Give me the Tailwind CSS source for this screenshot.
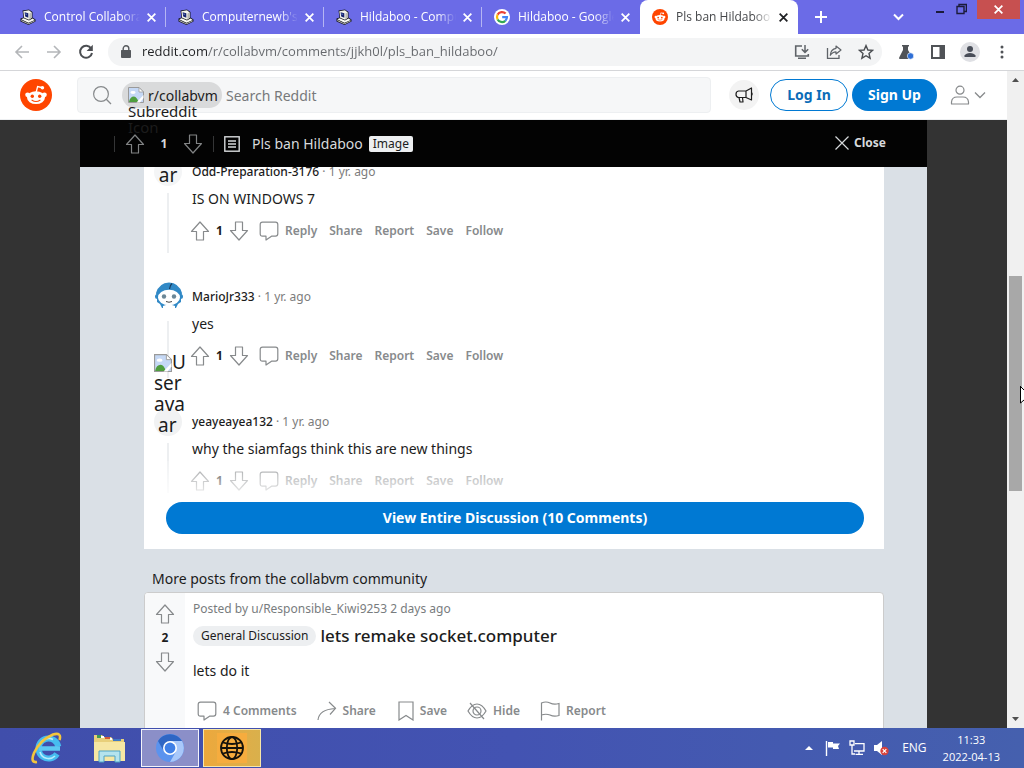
<!DOCTYPE html>
<html lang="en">
<head>
    <meta charset="UTF-8">
    <meta name="viewport" content="width=device-width, initial-scale=1.0">
    <title>Pls ban Hildaboo : collabvm</title>
    <script src="https://cdn.jsdelivr.net/npm/@tailwindcss/browser@4"></script>
</head>
<body class="h-screen overflow-hidden flex flex-col bg-white font-['Noto_Sans',sans-serif] text-[#1c1c1c]">
    <!-- Icon sprite -->
    <svg class="hidden" aria-hidden="true">
        <symbol id="up" viewBox="0 0 20 20"><path d="M10 1 L18.5 10.5 H13.5 V19 H6.5 V10.5 H1.5 Z" fill="none" stroke="currentColor" stroke-width="1.2" stroke-linejoin="round"/></symbol>
        <symbol id="down" viewBox="0 0 20 20"><path d="M10 19 L1.5 9.5 H6.5 V1 H13.5 V9.5 H18.5 Z" fill="none" stroke="currentColor" stroke-width="1.2" stroke-linejoin="round"/></symbol>
        <symbol id="comment" viewBox="0 0 20 20"><path d="M3.5 1.2 H16.5 Q18.8 1.2 18.8 3.5 V12.8 Q18.8 15.2 16.5 15.2 H12.5 L7 19 V15.2 H3.5 Q1.2 15.2 1.2 12.8 V3.5 Q1.2 1.2 3.5 1.2 Z" fill="none" stroke="currentColor" stroke-width="1.2" stroke-linejoin="round"/></symbol>
        <symbol id="close" viewBox="0 0 10 10"><path d="M1.5 1.5 L8.5 8.5 M8.5 1.5 L1.5 8.5" fill="none" stroke="currentColor" stroke-width="1.6"/></symbol>
        <symbol id="chevron" viewBox="0 0 12 8"><path d="M1 1.5 L6 6.5 L11 1.5" fill="none" stroke="currentColor" stroke-width="1.3"/></symbol>
        <symbol id="pc" viewBox="0 0 16 16">
            <path d="M2.5 1.5 L9 .5 L12.5 3 V8.5 L15.5 10.5 V12.5 L8.5 16 L.5 12.5 V9.5 L3.5 8.5 Z" fill="#15161f"/>
            <path d="M3.3 2.2 L9 1.3 L11.7 3.4 V8.8 L9 10.8 L4.2 8.8 Z" fill="#f4f4ec"/>
            <path d="M4.6 3.3 L8.3 4.3 V8.8 L5.2 7.6 Z" fill="#17246e"/>
            <path d="M5.3 4.4 L6.6 4.8 V6 L5.5 5.6 Z" fill="#7d9be0"/>
            <path d="M9.4 4.4 L11.7 3.4 V8.8 L9.4 10.6 Z" fill="#b9b9b4"/>
            <path d="M1.3 10.2 L3.6 9.3 L9 11.6 L12.6 9.4 L14.7 10.9 L8.5 13.8 Z" fill="#fafaf4"/>
            <path d="M1.3 11.1 L8.4 14.5 L14.7 11.6 V12.2 L8.5 15.2 L1.3 12 Z" fill="#d0d0ca"/>
        </symbol>
        <symbol id="reddit" viewBox="0 0 32 32">
            <circle cx="16" cy="16" r="16" fill="#ff4500"/>
            <path d="M16 14 L17.6 7.6 L21.6 8.5" fill="none" stroke="#fff" stroke-width="1.3"/>
            <circle cx="22.4" cy="8.7" r="1.8" fill="#fff"/>
            <circle cx="7.6" cy="15.8" r="2.4" fill="#fff"/>
            <circle cx="24.4" cy="15.8" r="2.4" fill="#fff"/>
            <ellipse cx="16" cy="18.6" rx="9" ry="6.4" fill="#fff"/>
            <circle cx="12.3" cy="17.2" r="1.7" fill="#ff4500"/>
            <circle cx="19.7" cy="17.2" r="1.7" fill="#ff4500"/>
            <path d="M12 21.2 Q16 23.8 20 21.2" fill="none" stroke="#ff4500" stroke-width="1.1" stroke-linecap="round"/>
        </symbol>
        <symbol id="broken" viewBox="0 0 16 16">
            <path d="M.5 .5 H11 L15.5 5 V15.5 H.5 Z" fill="#c5d8f5" stroke="#9a9a9a"/>
            <path d="M11 .5 V5 H15.5 Z" fill="#fff" stroke="#9a9a9a" stroke-width=".8"/>
            <ellipse cx="5" cy="5.5" rx="2.6" ry="1.4" fill="#fff"/>
            <path d="M1 15 Q2 9.5 6 9.5 Q9 10 10.5 15 Z" fill="#4f9e3e"/>
            <path d="M8.5 15.5 L15.5 8 V11 L12 15.5 Z" fill="#fff"/>
        </symbol>
    </svg>

    <!-- Tab strip -->
    <div class="h-[34px] shrink-0 flex bg-[#6b6be7] pl-2 text-[12px] text-white font-['Open_Sans',sans-serif]">
        <div class="flex-1 max-w-[158px] min-w-0 flex items-center pl-3 pr-2">
            <svg class="size-4 shrink-0"><use href="#pc"/></svg>
            <span class="flex-1 ml-2 overflow-hidden whitespace-nowrap mask-r-from-80% mask-r-to-100%">Control Collaborative</span>
            <button class="ml-1 p-0.5" aria-label="Close tab"><svg class="size-[11px]"><use href="#close"/></svg></button>
            <span class="ml-1.5 -mr-2 w-px h-5 bg-white/50"></span>
        </div>
        <div class="flex-1 max-w-[158px] min-w-0 flex items-center pl-3 pr-2">
            <svg class="size-4 shrink-0"><use href="#pc"/></svg>
            <span class="flex-1 ml-2 overflow-hidden whitespace-nowrap mask-r-from-80% mask-r-to-100%">Computernewb's VM</span>
            <button class="ml-1 p-0.5" aria-label="Close tab"><svg class="size-[11px]"><use href="#close"/></svg></button>
            <span class="ml-1.5 -mr-2 w-px h-5 bg-white/50"></span>
        </div>
        <div class="flex-1 max-w-[158px] min-w-0 flex items-center pl-3 pr-2">
            <svg class="size-4 shrink-0"><use href="#pc"/></svg>
            <span class="flex-1 ml-2 overflow-hidden whitespace-nowrap mask-r-from-80% mask-r-to-100%">Hildaboo - Computer</span>
            <button class="ml-1 p-0.5" aria-label="Close tab"><svg class="size-[11px]"><use href="#close"/></svg></button>
            <span class="ml-1.5 -mr-2 w-px h-5 bg-white/50"></span>
        </div>
        <div class="flex-1 max-w-[158px] min-w-0 flex items-center pl-3 pr-2">
            <svg class="size-4 shrink-0" viewBox="0 0 16 16">
                <circle cx="8" cy="8" r="8" fill="#fff"/>
                <g fill="none" stroke-width="2.2">
                    <path d="M11.6 4.6 A5 5 0 0 0 3.6 5.6" stroke="#ea4335"/>
                    <path d="M3.6 5.6 A5 5 0 0 0 3.6 10.4" stroke="#fbbc05"/>
                    <path d="M3.6 10.4 A5 5 0 0 0 11.3 11.8" stroke="#34a853"/>
                    <path d="M11.3 11.8 A5 5 0 0 0 13 8.1 H8.2" stroke="#4285f4"/>
                </g>
            </svg>
            <span class="flex-1 ml-2 overflow-hidden whitespace-nowrap mask-r-from-80% mask-r-to-100%">Hildaboo - Google</span>
            <button class="ml-1 p-0.5" aria-label="Close tab"><svg class="size-[11px]"><use href="#close"/></svg></button>
            <span class="ml-1.5 -mr-2 w-px h-5"></span>
        </div>
        <div class="flex-1 max-w-[158px] min-w-0 flex items-center pl-3 pr-2 bg-white rounded-t-lg text-[#45474a]">
            <svg class="size-4 shrink-0"><use href="#reddit"/></svg>
            <span class="flex-1 ml-2 overflow-hidden whitespace-nowrap mask-r-from-80% mask-r-to-100%">Pls ban Hildaboo : co</span>
            <button class="ml-1 p-0.5 text-[#202124]" aria-label="Close tab"><svg class="size-[11px]"><use href="#close"/></svg></button>
            <span class="ml-1.5 -mr-2 w-px h-5"></span>
        </div>
        <button class="ml-4 self-center" aria-label="New tab">
            <svg class="size-[14px]" viewBox="0 0 14 14"><path d="M7 1 V13 M1 7 H13" stroke="#fff" stroke-width="2"/></svg>
        </button>
        <button class="ml-auto mr-[26px] self-center" aria-label="Search tabs">
            <svg class="w-[11px] h-2" viewBox="0 0 11 8"><path d="M1 1.5 L5.5 6 L10 1.5" fill="none" stroke="#fff" stroke-width="2"/></svg>
        </button>
        <div class="flex items-start mr-1 text-[#1b1b3a]">
            <button class="w-5 h-[19px] mr-1.5 flex justify-center" aria-label="Minimize"><svg class="w-2 h-[19px]" viewBox="0 0 8 19"><path d="M0 12 H8" stroke="currentColor" stroke-width="2"/></svg></button>
            <button class="h-[19px] mr-2.5" aria-label="Restore"><svg class="w-[11px] h-[19px]" viewBox="0 0 11 19"><path d="M1 6.5 H8 V13.5 H1 Z M3 6 V4.5 H10.4 V11.5 H8.5" fill="none" stroke="currentColor" stroke-width="1.4"/></svg></button>
            <button class="w-[43px] h-[19px] bg-[#c75050] text-white flex items-center justify-center" aria-label="Close"><svg class="size-[11px]"><use href="#close"/></svg></button>
        </div>
    </div>

    <!-- Toolbar -->
    <div class="h-[37px] shrink-0 flex items-center bg-white border-b border-[#d5d6d9] pl-[14px] pr-[14px] text-[#5f6368]">
        <button aria-label="Back" class="mr-4 text-[#b4b6b9]"><svg class="size-4" viewBox="0 0 16 16"><path d="M15 8 H2 M8 2 L2 8 L8 14" fill="none" stroke="currentColor" stroke-width="1.6"/></svg></button>
        <button aria-label="Forward" class="mr-4 text-[#b4b6b9]"><svg class="size-4" viewBox="0 0 16 16"><path d="M1 8 H14 M8 2 L14 8 L8 14" fill="none" stroke="currentColor" stroke-width="1.6"/></svg></button>
        <button aria-label="Reload" class="mr-[14px]"><svg class="size-4" viewBox="0 0 16 16"><path d="M13.2 4.6 A6 6 0 1 0 14 9" fill="none" stroke="#4b4e52" stroke-width="2"/><path d="M14.8 .8 V7 H8.6 Z" fill="#4b4e52"/></svg></button>
        <div class="flex-1 h-7 flex items-center rounded-full bg-[#f3f4f5] pl-3 pr-2">
            <svg class="w-3 h-[14px] mr-[10px]" viewBox="0 0 12 14"><path d="M1.5 5 H10.5 Q11 5 11 5.6 V12 Q11 13 10 13 H2 Q1 13 1 12 V5.6 Q1 5 1.5 5 Z" fill="#55585c"/><path d="M3.2 5.5 V3.6 A2.8 2.8 0 0 1 8.8 3.6 V5.5" fill="none" stroke="#55585c" stroke-width="1.4"/></svg>
            <input type="text" aria-label="Address" value="reddit.com/r/collabvm/comments/jjkh0l/pls_ban_hildaboo/" class="flex-1 min-w-0 text-[13px] font-['Open_Sans',sans-serif] text-transparent bg-clip-text bg-[linear-gradient(90deg,#202124_66px,#65686c_66px)] outline-none">
            <button aria-label="Install app" class="mr-4"><svg class="size-4" viewBox="0 0 16 16"><path d="M8 2 H1.7 V12 H14.3 V10 M4 14.3 H12" fill="none" stroke="currentColor" stroke-width="1.6"/><path d="M11 1 V8 M7.8 5.2 L11 8.4 L14.2 5.2" fill="none" stroke="currentColor" stroke-width="1.5"/></svg></button>
            <button aria-label="Share page" class="mr-4"><svg class="size-4" viewBox="0 0 16 16"><path d="M1.5 4 V14.3 H13 V11" fill="none" stroke="currentColor" stroke-width="1.3"/><path d="M10 2 L15 6 L10 10 V7.8 Q6.5 7.8 4.3 11.3 Q4.8 5 10 4.3 Z" fill="none" stroke="currentColor" stroke-width="1.2" stroke-linejoin="round"/></svg></button>
            <button aria-label="Bookmark"><svg class="size-4" viewBox="0 0 16 16"><path d="M8 1.6 L9.9 6 L14.6 6.4 L11 9.5 L12.1 14.2 L8 11.7 L3.9 14.2 L5 9.5 L1.4 6.4 L6.1 6 Z" fill="none" stroke="#4b4e52" stroke-width="1.4"/></svg></button>
        </div>
        <button aria-label="Experiments" class="ml-4 mr-4"><svg class="size-4" viewBox="0 0 16 16"><path d="M4 1 H11 V2.5 H10 V6 L14 13 Q14.5 15 13 15 H2 Q.6 15 1.2 13.4 L5 6 V2.5 H4 Z" fill="#505357"/><circle cx="12.5" cy="12" r="3.2" fill="#2f6fd6" stroke="#fff" stroke-width=".6"/></svg></button>
        <button aria-label="Side panel" class="mr-[14px]"><svg class="size-4" viewBox="0 0 16 16"><rect x="2" y="2" width="12" height="12" fill="none" stroke="#505357" stroke-width="2"/><rect x="9.5" y="2" width="4.5" height="12" fill="#505357"/></svg></button>
        <button aria-label="Profile" class="mr-[14px] size-5 rounded-full bg-[#dfe0e4]"><svg class="size-5" viewBox="0 0 20 20"><circle cx="10" cy="7" r="3" fill="#484d58"/><path d="M4.5 15 V13.6 Q6 11 10 11 Q14 11 15.5 13.6 V15 Z" fill="#484d58"/></svg></button>
        <button aria-label="Menu" class="w-4 flex justify-center"><svg class="w-1 h-[14px]" viewBox="0 0 4 14" fill="#505357"><circle cx="2" cy="2" r="1.5"/><circle cx="2" cy="7" r="1.5"/><circle cx="2" cy="12" r="1.5"/></svg></button>
    </div>

    <!-- Page -->
    <div class="flex-1 min-h-0 flex">
        <div class="flex-1 min-w-0 flex flex-col">
            <!-- Site header -->
            <header class="relative z-20 h-[49px] shrink-0 flex items-center bg-white border-b border-[#edeff1] pl-5 pr-[21px]">
                <a href="#" aria-label="Home"><svg class="size-8"><use href="#reddit"/></svg></a>
                <div class="ml-[25px] mr-[18px] flex-1 h-9 flex items-center bg-[#f6f7f8] border border-[#edeff1] rounded-sm pl-[14px]">
                    <svg class="size-5" viewBox="0 0 20 20"><circle cx="9" cy="9" r="7.4" fill="none" stroke="#878a8c" stroke-width="1.2"/><path d="M14.3 14.3 L19 19" stroke="#878a8c" stroke-width="1.3"/></svg>
                    <div class="relative ml-[10px] h-[26px] w-[100px] flex items-center rounded-full bg-[#d9dadb] pl-1.5 text-[14px]">
                        <svg class="size-4 mr-1"><use href="#broken"/></svg>r/collabvm
                        <span class="absolute left-[6px] top-[21px] text-[15px] leading-4">Subreddit<br>Icon</span>
                    </div>
                    <input type="search" aria-label="Search Reddit" placeholder="Search Reddit" class="ml-1 flex-1 min-w-0 text-[14px] placeholder:text-[#77797b] outline-none">
                </div>
                <button aria-label="Advertise" class="size-[30px] rounded-full bg-[#f3f3f3] flex items-center justify-center mr-[11px]">
                    <svg class="size-5" viewBox="0 0 20 20" fill="none" stroke="#1c1c1c" stroke-width="1.2" stroke-linejoin="round"><path d="M12 6 L17.5 3 V15 L12 12.5 H4.5 Q2 12 2 9.2 Q2 6.4 4.5 6 Z M12 6 V12.5 M5 12.5 L6 17 H9 L8.5 12.5 M17.5 7 Q19 9 17.5 11"/></svg>
                </button>
                <button class="h-8 w-[78px] pb-0.5 rounded-full border border-[#0079d3] text-[#0b6cb8] text-[14px] font-bold mr-1">Log In</button>
                <button class="h-8 w-[85px] pb-0.5 rounded-full bg-[#0079d3] text-white text-[14px] font-bold mr-[13px]">Sign Up</button>
                <button aria-label="User menu" class="flex items-center gap-1 text-[#878a8c]">
                    <svg class="size-5" viewBox="0 0 20 20" fill="none" stroke="currentColor" stroke-width="1.2"><circle cx="10" cy="5.2" r="4"/><path d="M1.5 19 V17 Q2 12 7 12 H13 Q18 12 18.5 17 V19 Z" stroke-linejoin="round"/></svg>
                    <svg class="w-3 h-2"><use href="#chevron"/></svg>
                </button>
            </header>

            <!-- Overlay -->
            <div class="flex-1 min-h-0 bg-[#333333] px-20">
                <div class="h-full flex flex-col overflow-hidden bg-[#dae0e6]">
                    <div class="relative z-10 h-[47px] shrink-0 flex items-center bg-[#030303] text-[#d7dadc] pl-[34px] pr-[41px]">
                        <span class="w-px h-4 bg-[#343536]"></span>
                        <button aria-label="Upvote" class="ml-[10px] text-[#818384]"><svg class="size-5"><use href="#up"/></svg></button>
                        <span class="w-[38px] text-center text-[12px] font-bold">1</span>
                        <button aria-label="Downvote" class="text-[#818384]"><svg class="size-5"><use href="#down"/></svg></button>
                        <span class="ml-[10px] w-px h-4 bg-[#343536]"></span>
                        <svg class="ml-[10px] size-4" viewBox="0 0 16 16" fill="none" stroke="#d7dadc"><rect x=".8" y=".8" width="14.4" height="14.4" stroke-width="1.4"/><path d="M4 5 H12 M4 8 H12 M4 11 H12" stroke-width="1.3"/></svg>
                        <h1 class="ml-3 text-[14px]">Pls ban Hildaboo</h1>
                        <span class="ml-1.5 px-1 h-4 leading-4 rounded-xs bg-[#edeff1] text-[#1c1c1c] text-[12px]">Image</span>
                        <button class="ml-auto pb-px flex items-center gap-1 text-[12px] font-bold"><svg class="size-4" viewBox="0 0 16 16"><path d="M1.5 1.5 L14.5 14.5 M14.5 1.5 L1.5 14.5" stroke="currentColor" stroke-width="1.2"/></svg>Close</button>
                    </div>

                    <!-- Comments -->
                    <section class="relative -mt-[9px] ml-16 mr-[43px] shrink-0 bg-white pb-[15px]">
                        <article class="flex h-[125px] pl-[10px]">
                            <div class="relative w-[38px] shrink-0 flex flex-col">
                                <div class="size-7 rounded-full bg-[#f4f5f6]"></div>
                                <div class="ml-[13px] mt-[7px] w-0.5 h-[60px] bg-[#edeff1]"></div>
                                <div class="absolute left-0 bottom-[97px] w-7 text-center text-[19px] leading-[21px]">ar</div>
                            </div>
                            <div>
                                <div class="h-7 flex items-center text-[12px]"><a href="#" class="font-medium">Odd-Preparation-3176</a><span class="text-[#7c7c7c] whitespace-pre"> · 1 yr. ago</span></div>
                                <p class="mt-0.5 text-[14px] leading-[21px]">IS ON WINDOWS 7</p>
                                <div class="mt-[10px] h-6 flex items-center text-[12px] font-semibold text-[#878a8c]">
                                    <button aria-label="Upvote" class="-ml-0.5"><svg class="size-5"><use href="#up"/></svg></button>
                                    <span class="w-[19px] text-center font-bold text-[#1c1c1c]">1</span>
                                    <button aria-label="Downvote"><svg class="size-5"><use href="#down"/></svg></button>
                                    <button class="ml-[10px] flex items-center gap-1.5"><svg class="size-5"><use href="#comment"/></svg>Reply</button>
                                    <button class="ml-3">Share</button>
                                    <button class="ml-3">Report</button>
                                    <button class="ml-3">Save</button>
                                    <button class="ml-3">Follow</button>
                                </div>
                            </div>
                        </article>
                        <article class="flex h-[125px] pl-[10px]">
                            <div class="w-[38px] shrink-0 flex flex-col">
                                <svg class="size-7 ml-px -mt-px" viewBox="0 0 28 28">
                                    <path d="M5 22 L7 26 H21 L23 22 L26 20 L26 16 L27 11 Q24 1 14 .5 Q4 1 1 11 L2 16 L2 20 Z" fill="#3189c6"/>
                                    <circle cx="2.5" cy="14.5" r="2.5" fill="#3189c6"/><circle cx="25.5" cy="14.5" r="2.5" fill="#3189c6"/>
                                    <ellipse cx="14" cy="15.5" rx="11" ry="7.8" fill="#fff"/>
                                    <path d="M8 24 Q14 21 20 24 V27 H8 Z" fill="#fff"/>
                                    <path d="M14.5 7 Q15 3 17 1.5" fill="none" stroke="#173a5c" stroke-width="1.2"/>
                                    <circle cx="9" cy="14.5" r="2.2" fill="#6b8797"/><circle cx="19" cy="14.5" r="2.2" fill="#6b8797"/>
                                    <path d="M11 19.5 Q14 21 17 19.5" fill="none" stroke="#444" stroke-width="1"/>
                                </svg>
                                <div class="ml-[13px] mt-[11px] w-0.5 h-[57px] bg-[#edeff1]"></div>
                            </div>
                            <div>
                                <div class="h-7 flex items-center text-[12px]"><a href="#" class="font-medium">MarioJr333</a><span class="text-[#7c7c7c] whitespace-pre"> · 1 yr. ago</span></div>
                                <p class="mt-0.5 text-[14px] leading-[21px]">yes</p>
                                <div class="mt-[10px] h-6 flex items-center text-[12px] font-semibold text-[#878a8c]">
                                    <button aria-label="Upvote" class="-ml-0.5"><svg class="size-5"><use href="#up"/></svg></button>
                                    <span class="w-[19px] text-center font-bold text-[#1c1c1c]">1</span>
                                    <button aria-label="Downvote"><svg class="size-5"><use href="#down"/></svg></button>
                                    <button class="ml-[10px] flex items-center gap-1.5"><svg class="size-5"><use href="#comment"/></svg>Reply</button>
                                    <button class="ml-3">Share</button>
                                    <button class="ml-3">Report</button>
                                    <button class="ml-3">Save</button>
                                    <button class="ml-3">Follow</button>
                                </div>
                            </div>
                        </article>
                        <article class="relative flex pl-[10px]">
                            <div class="relative w-[38px] shrink-0 flex flex-col">
                                <div class="size-7 rounded-full bg-[#f1f2f3]"></div>
                                <div class="ml-[13px] mt-[7px] w-0.5 h-[50px] bg-[#edeff1]"></div>
                                <!-- alt text of the avatar that failed to load -->
                                <div class="absolute left-0 bottom-[57px] w-8 text-[19px] leading-[21px]">
                                    <div class="flex items-center"><svg class="w-[18px] h-5"><use href="#broken"/></svg>U</div>
                                    <div>ser</div>
                                    <div>ava</div>
                                    <div class="pl-1">ar</div>
                                </div>
                            </div>
                            <div>
                                <div class="h-7 flex items-center text-[12px]"><a href="#" class="font-medium">yeayeayea132</a><span class="text-[#7c7c7c] whitespace-pre"> · 1 yr. ago</span></div>
                                <p class="mt-0.5 text-[14px] leading-[21px]">why the siamfags think this are new things</p>
                                <div class="mt-[10px] h-6 flex items-center text-[12px] font-semibold text-[#878a8c]">
                                    <button aria-label="Upvote" class="-ml-0.5"><svg class="size-5"><use href="#up"/></svg></button>
                                    <span class="w-[19px] text-center font-bold text-[#1c1c1c]">1</span>
                                    <button aria-label="Downvote"><svg class="size-5"><use href="#down"/></svg></button>
                                    <button class="ml-[10px] flex items-center gap-1.5"><svg class="size-5"><use href="#comment"/></svg>Reply</button>
                                    <button class="ml-3">Share</button>
                                    <button class="ml-3">Report</button>
                                    <button class="ml-3">Save</button>
                                    <button class="ml-3">Follow</button>
                                </div>
                            </div>
                            <div class="absolute inset-x-0 bottom-0 h-8 bg-linear-to-b from-white/20 to-white/80 pointer-events-none"></div>
                        </article>
                        <div class="flex mt-[9px] ml-[22px] mr-5">
                            <button class="flex-1 h-8 pb-0.5 rounded-full bg-[#0079d3] text-white text-[14px] font-bold">View Entire Discussion (10 Comments)</button>
                        </div>
                    </section>

                    <!-- More posts -->
                    <h2 class="shrink-0 ml-[72px] mt-5 mb-[3px] text-[14px] leading-5">More posts from the collabvm community</h2>
                    <article class="shrink-0 ml-16 mr-[43px] flex h-44 bg-white border border-[#ccc] rounded-sm overflow-hidden">
                        <div class="w-10 shrink-0 flex flex-col items-center pt-[11px] bg-[#f8f9fa] text-[#878a8c]">
                            <button aria-label="Upvote"><svg class="size-5"><use href="#up"/></svg></button>
                            <span class="my-[5px] text-[12px] leading-[18px] font-bold text-[#1c1c1c]">2</span>
                            <button aria-label="Downvote"><svg class="size-5"><use href="#down"/></svg></button>
                        </div>
                        <div class="pl-2 pt-2">
                            <div class="text-[12px] leading-4 text-[#787c7e]">Posted by u/Responsible_Kiwi9253 2 days ago</div>
                            <div class="mt-[7px] h-6 flex items-center">
                                <span class="px-2 h-5 leading-5 rounded-full bg-[#edeff1] text-[12px]">General Discussion</span>
                                <h3 class="ml-1 text-[17px] font-medium">lets remake socket.computer</h3>
                            </div>
                            <p class="mt-3 text-[14px] leading-[21px]">lets do it</p>
                            <div class="mt-[18px] ml-1 h-6 flex items-center gap-5 text-[12px] font-semibold text-[#878a8c]">
                                <button class="flex items-center gap-1.5"><svg class="size-5"><use href="#comment"/></svg>4 Comments</button>
                                <button class="flex items-center gap-1.5"><svg class="size-5" viewBox="0 0 20 20"><path d="M1 19 Q2 8.5 18 7.5 M12 1 L18.5 7.3 L13 13.5" fill="none" stroke="currentColor" stroke-width="1.2"/></svg>Share</button>
                                <button class="flex items-center gap-1"><svg class="size-5" viewBox="0 0 20 20"><path d="M3 1 H17 V19 L10 14.5 L3 19 Z" fill="none" stroke="currentColor" stroke-width="1.2"/></svg>Save</button>
                                <button class="flex items-center gap-1.5"><svg class="size-5" viewBox="0 0 20 20" fill="none" stroke="currentColor" stroke-width="1.2"><path d="M1 10 Q5 3 10 3 Q15 3 19 10 Q15 17 10 17 Q5 17 1 10 Z M3 2 L17 18"/><circle cx="10" cy="10" r="4"/></svg>Hide</button>
                                <button class="flex items-center gap-1.5"><svg class="size-5" viewBox="0 0 20 20"><path d="M1.5 19.5 V2 Q6 0 10 2 Q14 4 19 2.5 V14.5 Q14 16 10 14 Q6 12.5 1.5 14" fill="none" stroke="currentColor" stroke-width="1.2"/></svg>Report</button>
                            </div>
                        </div>
                    </article>
                </div>
            </div>
        </div>

        <!-- Scrollbar -->
        <div class="relative w-[17px] shrink-0 flex flex-col items-center bg-[#f0f0f0]">
            <svg class="size-[17px]" viewBox="0 0 17 17"><path d="M5 11 L8.5 7 L12 11 Z" fill="#505050"/></svg>
            <div class="grow-[188]"></div>
            <div class="grow-[215] w-[13px] bg-[#a8a8a8]"></div>
            <div class="grow-[220]"></div>
            <svg class="size-[17px]" viewBox="0 0 17 17"><path d="M5 6 L8.5 10 L12 6 Z" fill="#505050"/></svg>
            <!-- mouse pointer at the window edge -->
            <svg class="absolute right-0 top-[48%] w-1 h-[18px]" viewBox="0 0 4 18"><path d="M.5 .5 V17 L4 14 V4 Z" fill="#fff"/><path d="M.5 0 V17 L4 14 M.5 .5 L4 4" fill="none" stroke="#000"/></svg>
        </div>
    </div>

    <!-- Taskbar -->
    <footer class="h-10 shrink-0 flex items-center bg-linear-to-r from-[#404eab] via-[#4353b2] to-[#4560ae] text-white font-['Open_Sans',sans-serif]">
        <button aria-label="Internet Explorer" class="w-[62px] ml-4 h-full flex items-center justify-center">
            <svg class="size-8" viewBox="0 0 32 32">
                <circle cx="17.5" cy="16.5" r="10" fill="none" stroke="#46bdf0" stroke-width="6" stroke-dasharray="55 8" transform="rotate(32 17.5 16.5)"/>
                <path d="M8 16.5 H29" stroke="#5cc8f3" stroke-width="4.5"/>
                <path d="M9 13 A9 9 0 0 1 22 7.5 M9 20 A9 9 0 0 0 24 24" fill="none" stroke="#b5ecfc" stroke-width="1.6"/>
                <path d="M6 30 Q-1 31 3 21 Q9 8 22 2.5 Q31 0 28.5 8" fill="none" stroke="#f3c63d" stroke-width="2.6"/>
            </svg>
        </button>
        <button aria-label="File Explorer" class="w-[62px] h-full flex items-center justify-center">
            <svg class="size-8" viewBox="0 0 32 32">
                <path d="M1 3 H9 L11 5 H18 L20 7 H31 V29 H1 Z" fill="#e8cf7a"/>
                <path d="M4 3 H8 V6 H4 Z" fill="#3f9a52"/><path d="M12 5 H17 V7 H12 Z" fill="#cf5a3a"/><path d="M20 7 H28 V9 H20 Z" fill="#4078c4"/>
                <path d="M8 4 H11 V6 H8 Z M17 6 H19 V8 H17 Z" fill="#fff"/>
                <path d="M1 10 H32 V29 H1 Z" fill="#f6e6a3"/>
                <path d="M6 30 V19 H27 V30 H22 V24 H11 V30 Z" fill="#b4e3ee" stroke="#4fa3c4"/>
            </svg>
        </button>
        <button aria-label="Chromium" class="ml-px w-[58px] h-[38px] flex items-center justify-center bg-[#8b8fc8] border border-white/90">
            <svg class="size-7" viewBox="0 0 28 28">
                <circle cx="14" cy="14" r="14" fill="#5b93ee"/>
                <path d="M14 7 H26 A14 14 0 0 0 2 7 L8 17.5 Z" fill="#2f66c4"/>
                <path d="M26 7 H14 L20 17.5 L14 28 A14 14 0 0 0 26 7 Z" fill="#a9c8fa"/>
                <circle cx="14" cy="14" r="7" fill="#fff"/><circle cx="14" cy="14" r="5.4" fill="#3f7fe6"/>
            </svg>
        </button>
        <button aria-label="Network" class="ml-1 w-[58px] h-[38px] flex items-center justify-center bg-linear-to-r from-[#eda83c] to-[#d9b04c] border border-[#f7e6a8]">
            <svg class="size-8" viewBox="0 0 32 32">
                <rect x="1" y="1" width="30" height="30" fill="#f6ac3e"/>
                <g fill="none" stroke="#15120c" stroke-width="1.8"><circle cx="16" cy="16" r="11"/><ellipse cx="16" cy="16" rx="5.2" ry="11"/><path d="M5 16 H27 M7 10.5 Q16 13.5 25 10.5 M7 21.5 Q16 18.5 25 21.5"/></g>
            </svg>
        </button>
        <div class="ml-auto flex items-center pr-6">
            <svg class="w-2 h-[6px] mr-3" viewBox="0 0 8 6"><path d="M0 5 L4 1 L8 5 Z" fill="#fff"/></svg>
            <svg class="size-4 mr-2" viewBox="0 0 16 16"><path d="M1.5 1 V16" stroke="#fff" stroke-width="1.4"/><path d="M3 2 H8 V3.5 H15 L13 6 L14 9 H8 V7.5 H3 Z" fill="#fff"/></svg>
            <svg class="size-4 mr-2" viewBox="0 0 16 16" fill="none" stroke="#fff" stroke-width="1.3"><path d="M6 3.6 H15 V11 H5 M10 11 V14 M6.5 14.4 H14"/><path d="M1 1 H5 V5 H1 Z M3 5 V14 H6"/></svg>
            <svg class="size-4 mr-[13px]" viewBox="0 0 16 16"><path d="M1 5 H4 L9 1 V15 L4 11 H1 Z" fill="#fff"/><circle cx="11.5" cy="11" r="4.2" fill="#d8433c"/><path d="M9.7 9.2 L13.3 12.8 M13.3 9.2 L9.7 12.8" stroke="#fff" stroke-width="1.2"/></svg>
            <span class="text-[12px] mr-4">ENG</span>
            <div class="text-[11px] leading-[17px] text-center">11:33<br>2022-04-13</div>
        </div>
    </footer>
</body>
</html>
